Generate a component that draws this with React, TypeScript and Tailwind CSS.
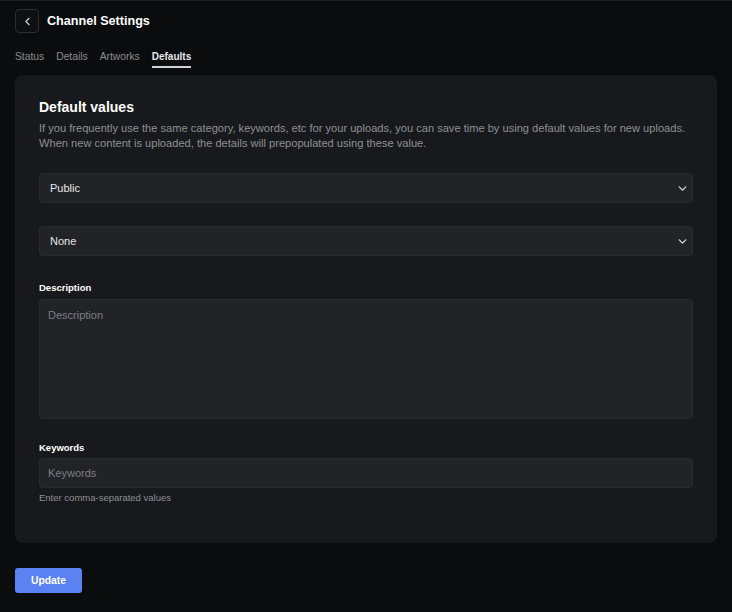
import React from "react";

function Chevron() {
  return (
    <svg width="13" height="13" viewBox="0 0 24 24" fill="none" stroke="#d4d4d8" strokeWidth="2.5" strokeLinecap="round" strokeLinejoin="round">
      <path d="M6 9l6 6 6-6" />
    </svg>
  );
}

function SelectBox({ value }: { value: string }) {
  return (
    <div className="flex h-[30px] items-center justify-between rounded-[4px] border border-[#2a2b2f] bg-[#222327] pl-[10px] pr-[3px]">
      <span className="text-[11px] text-[#e5e7eb]">{value}</span>
      <Chevron />
    </div>
  );
}

export default function App() {
  return (
    <div
      className="min-h-[612px] w-full bg-[#0b0c0e] text-white border-t border-[#1c1d20]"
      style={{ fontFamily: '"Liberation Sans", Arial, sans-serif' }}
    >
      <div className="px-[15px] pt-[8px]">
        <div className="flex items-center gap-[8px]">
          <button className="flex h-[24px] w-[24px] items-center justify-center rounded-[4px] border border-[#2c2d31] bg-[#0e0f11]">
            <svg width="13" height="13" viewBox="0 0 24 24" fill="none" stroke="#d4d4d8" strokeWidth="2" strokeLinecap="round" strokeLinejoin="round">
              <path d="M15 18l-6-6 6-6" />
            </svg>
          </button>
          <h1 className="text-[12.6px] font-bold text-white">Channel Settings</h1>
        </div>
        <div className="mt-[18px] flex gap-[12px] text-[10.3px] leading-[12px]">
          <span className="pb-[4px] text-[#8b8d93]">Status</span>
          <span className="pb-[4px] text-[#8b8d93]">Details</span>
          <span className="pb-[4px] text-[#8b8d93]">Artworks</span>
          <span className="border-b-2 border-[#d4d4d8] pb-[3px] text-[10px] font-bold text-[#e5e7eb]">Defaults</span>
        </div>

        <div className="mt-[7px] rounded-[8px] bg-[#18191c] px-[24px] pb-[39px] pt-[24px]">
          <h2 className="text-[14px] font-bold leading-[16px] text-white">Default values</h2>
          <p className="mt-[6px] text-[11.1px] leading-[15px] text-[#8e9096]">
            If you frequently use the same category, keywords, etc for your uploads, you can save time by using default values for new uploads.
            <br />
            When new content is uploaded, the details will prepopulated using these value.
          </p>

          <div className="mt-[22px]">
            <SelectBox value="Public" />
          </div>
          <div className="mt-[23px]">
            <SelectBox value="None" />
          </div>

          <div className="mt-[26px]">
            <label className="block text-[9.5px] font-bold leading-[12px] text-white">Description</label>
            <div className="mt-[5px] h-[120px] rounded-[4px] border border-[#2a2b2f] bg-[#222327] px-[8px] pt-[8px] text-[11px] leading-[14px]">
              <span className="text-[#7c7e84]">Description</span>
            </div>
          </div>

          <div className="mt-[23px]">
            <label className="block text-[9.5px] font-bold leading-[12px] text-white">Keywords</label>
            <div className="mt-[4px] flex h-[30px] items-center rounded-[4px] border border-[#2a2b2f] bg-[#222327] px-[8px]">
              <span className="text-[11px] text-[#7c7e84]">Keywords</span>
            </div>
            <p className="mt-[4px] text-[9.5px] leading-[12px] text-[#8e9096]">Enter comma-separated values</p>
          </div>
        </div>

        <button className="mt-[25px] flex h-[25px] w-[67px] items-center justify-center rounded-[3px] bg-[#5b82f3] text-[10.3px] font-bold text-white">
          Update
        </button>
      </div>
    </div>
  );
}
